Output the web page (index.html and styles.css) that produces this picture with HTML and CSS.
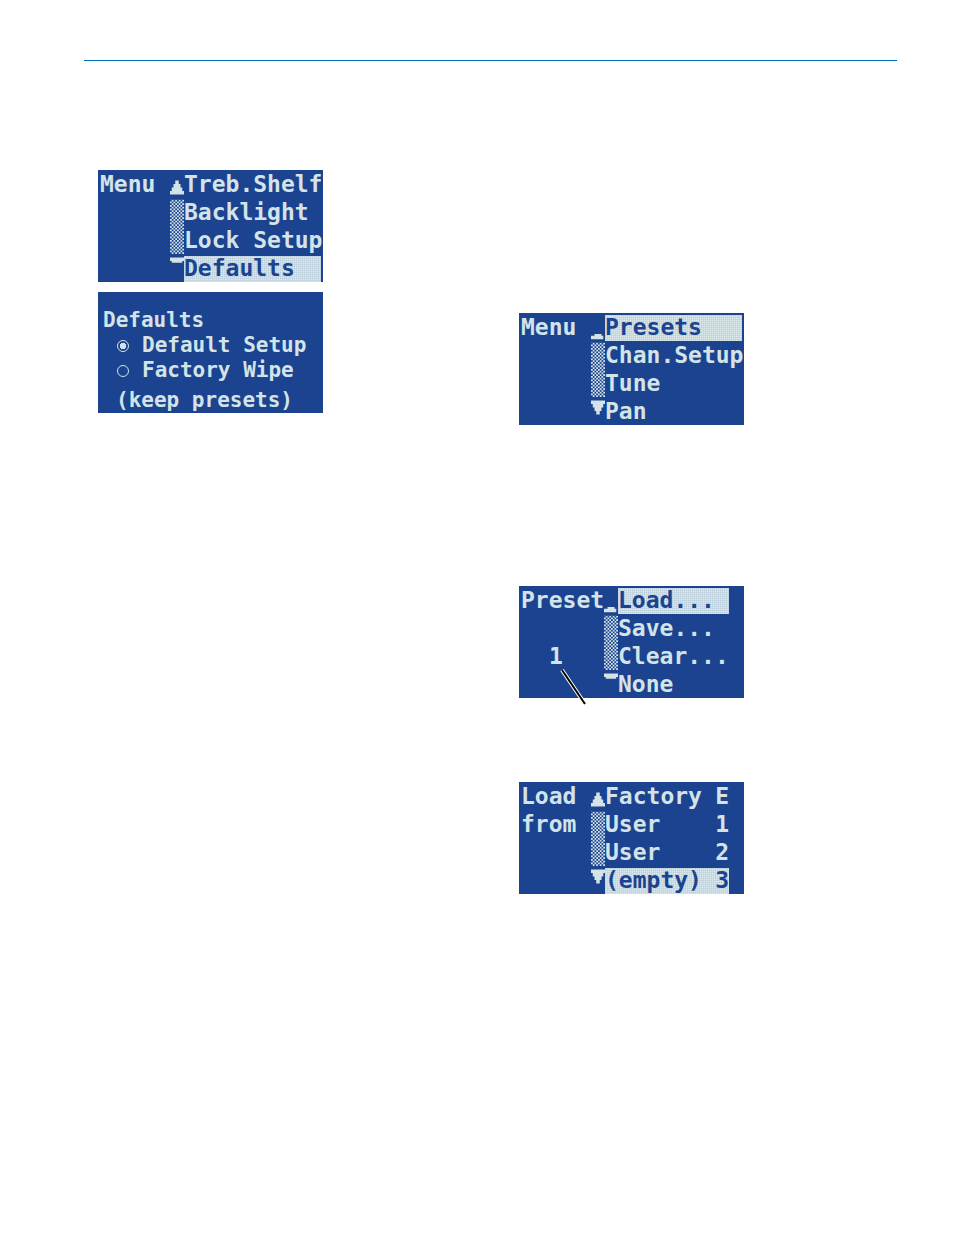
FILE: index.html
```html
<!DOCTYPE html>
<html lang="en">
<head>
  <meta charset="UTF-8">
  <title>Presets and Defaults</title>
  <link rel="stylesheet" href="styles.css">
</head>
<body>

<svg class="defs" aria-hidden="true">
  <defs>
    <pattern id="dots" width="2" height="2" patternUnits="userSpaceOnUse">
      <rect width="1" height="1"/>
      <rect x="1" y="1" width="1" height="1"/>
    </pattern>
    <symbol id="track" viewBox="0 0 8 64">
      <rect x="0" y="17" width="8" height="31" fill="url(#dots)"/>
    </symbol>
    <symbol id="up" viewBox="0 0 8 64">
      <path d="M3 6h2v2h1v2h1v2h1v2H0v-2h1v-2h1V8h1z"/>
    </symbol>
    <symbol id="down" viewBox="0 0 8 64">
      <path d="M0 50h8v2H7v2H6v2H5v2H3v-2H2v-2H1v-2H0z"/>
    </symbol>
    <symbol id="top" viewBox="0 0 8 64">
      <path d="M2 12h4v1h1v2H0v-2h2z"/>
    </symbol>
    <symbol id="bottom" viewBox="0 0 8 64">
      <path d="M0 50h8v2H7v1H1v-1H0z"/>
    </symbol>
  </defs>
</svg>

<main class="page">
  <div class="column left">

    <section class="lcd menu">
      <div class="title">Menu</div>
      <svg class="scroll" viewBox="0 0 8 64" aria-hidden="true"><use href="#up"/><use href="#track"/><use href="#bottom"/></svg>
      <div class="items">
        <button type="button">Treb.Shelf</button>
        <button type="button">Backlight</button>
        <button type="button">Lock Setup</button>
        <button type="button" class="selected">Defaults</button>
      </div>
    </section>

    <form class="lcd defaults">
      <div>Defaults</div>
      <div class="option">
        <input type="radio" id="setup" name="defaults" checked>
        <label for="setup">Default Setup</label>
      </div>
      <div class="option">
        <input type="radio" id="wipe" name="defaults">
        <label for="wipe">Factory Wipe</label>
      </div>
      <div class="note">(keep presets)</div>
    </form>

  </div>
  <div class="column right">

    <section class="lcd menu">
      <div class="title">Menu</div>
      <svg class="scroll" viewBox="0 0 8 64" aria-hidden="true"><use href="#top"/><use href="#track"/><use href="#down"/></svg>
      <div class="items">
        <button type="button" class="selected">Presets</button>
        <button type="button">Chan.Setup</button>
        <button type="button">Tune</button>
        <button type="button">Pan</button>
      </div>
    </section>

    <section class="lcd menu preset">
      <div class="title">Preset
        <span class="number">1</span>
      </div>
      <svg class="scroll" viewBox="0 0 8 64" aria-hidden="true"><use href="#top"/><use href="#track"/><use href="#bottom"/></svg>
      <div class="items narrow">
        <button type="button" class="selected">Load...</button>
        <button type="button">Save...</button>
        <button type="button">Clear...</button>
        <button type="button">None</button>
      </div>
      <svg class="pointer" viewBox="0 0 28 40" aria-hidden="true">
        <path class="halo" d="M2 2L25 36"/>
        <path class="line" d="M2 2L25 36"/>
      </svg>
    </section>

    <section class="lcd menu load">
      <div class="title">Load<br>from</div>
      <svg class="scroll" viewBox="0 0 8 64" aria-hidden="true"><use href="#up"/><use href="#track"/><use href="#down"/></svg>
      <div class="items narrow">
        <button type="button"><span>Factory</span><span>E</span></button>
        <button type="button"><span>User</span><span>1</span></button>
        <button type="button"><span>User</span><span>2</span></button>
        <button type="button" class="selected"><span>(empty)</span><span>3</span></button>
      </div>
    </section>

  </div>
</main>

</body>
</html>
```

FILE: styles.css
```css
* {
  box-sizing: border-box;
}
body {
  margin: 0;
  background: #fff;
  font-family: "DejaVu Sans Mono", monospace;
}
.defs {
  position: absolute;
  width: 0;
  height: 0;
  fill: #d3e3e8;
}
.page {
  display: grid;
  grid-template-columns: 1fr 1fr;
  column-gap: 29px;
  margin: 60px 57px 0 84px;
  border-top: 1px solid #0070b8;
}
.column {
  display: flex;
  flex-direction: column;
  align-items: flex-start;
  padding-left: 14px;
}
.left {
  gap: 10px;
  padding-top: 109px;
}
.right {
  padding-top: 252px;
}
.lcd {
  width: 225px;
  background: #1b4390;
  color: #d3e3e8;
  font-size: 23px;
  font-weight: bold;
  line-height: 28px;
}
.menu {
  display: grid;
  grid-template-columns: 72px 14px minmax(0, 1fr);
  position: relative;
}
.title {
  padding-left: 2px;
  white-space: nowrap;
}
.scroll {
  width: 14px;
  height: 112px;
  fill: #d3e3e8;
}
.items {
  display: flex;
  flex-direction: column;
  padding-right: 2px;
}
.items button {
  display: flex;
  justify-content: space-between;
  height: 28px;
  padding: 0;
  border: none;
  background: none;
  color: inherit;
  font: inherit;
  white-space: nowrap;
  cursor: pointer;
}
.narrow {
  padding-right: 15px;
}
.items .selected {
  border-top: 2px solid #1b4390;
  background-color: #dae8ea;
  background-image:
    repeating-linear-gradient(90deg, rgba(27, 67, 144, 0.08) 0 1px, transparent 1px 2px),
    repeating-linear-gradient(rgba(27, 67, 144, 0.08) 0 1px, transparent 1px 2px);
  color: #1b4390;
  line-height: 24px;
}
.preset {
  grid-template-columns: 85px 14px minmax(0, 1fr);
  margin-top: 161px;
}
.number {
  display: block;
  padding: 28px 0 0 28px;
}
.pointer {
  position: absolute;
  top: 82px;
  left: 41px;
  width: 28px;
  height: 40px;
  fill: none;
}
.halo {
  stroke: #fff;
  stroke-width: 4;
}
.line {
  stroke: #000;
  stroke-width: 2;
}
.load {
  margin-top: 84px;
}
.defaults {
  padding: 16px 0 0 5px;
  height: 121px;
  font-size: 21px;
  line-height: 25px;
}
.option {
  display: flex;
  align-items: center;
  gap: 13px;
  padding-left: 14px;
}
.option input {
  appearance: none;
  width: 12px;
  height: 12px;
  margin: 0;
  border: 1px solid #d3e3e8;
  border-radius: 50%;
}
.option input:checked {
  background: radial-gradient(#d3e3e8 0 3px, transparent 3px);
}
.note {
  padding-left: 13px;
  line-height: 34px;
}
```
